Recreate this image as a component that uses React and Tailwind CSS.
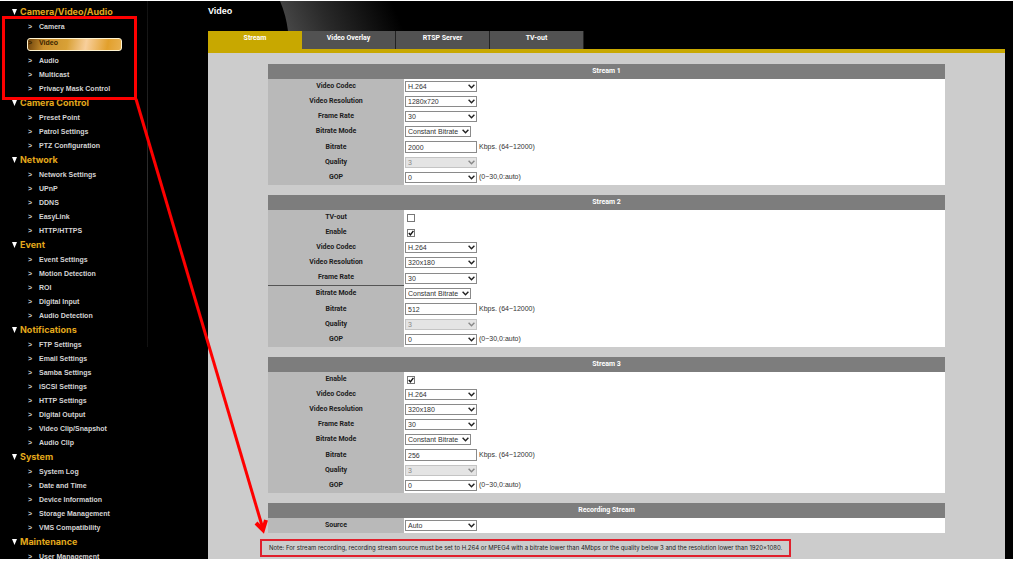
import React, { useId } from 'react';

const menu = [
    { title: 'Camera/Video/Audio', items: ['Camera', 'Video', 'Audio', 'Multicast', 'Privacy Mask Control'] },
    { title: 'Camera Control', items: ['Preset Point', 'Patrol Settings', 'PTZ Configuration'] },
    { title: 'Network', items: ['Network Settings', 'UPnP', 'DDNS', 'EasyLink', 'HTTP/HTTPS'] },
    { title: 'Event', items: ['Event Settings', 'Motion Detection', 'ROI', 'Digital Input', 'Audio Detection'] },
    {
        title: 'Notifications',
        items: [
            'FTP Settings',
            'Email Settings',
            'Samba Settings',
            'iSCSI Settings',
            'HTTP Settings',
            'Digital Output',
            'Video Clip/Snapshot',
            'Audio Clip',
        ],
    },
    { title: 'System', items: ['System Log', 'Date and Time', 'Device Information', 'Storage Management', 'VMS Compatibility'] },
    { title: 'Maintenance', items: ['User Management'] },
];

const tabs = ['Stream', 'Video Overlay', 'RTSP Server', 'TV-out'];

const streamRows = (resolution, bitrate, divider = false) => [
    { label: 'Video Codec', type: 'select', value: 'H.264' },
    { label: 'Video Resolution', type: 'select', value: resolution },
    { label: 'Frame Rate', type: 'select', value: '30', divider },
    { label: 'Bitrate Mode', type: 'select', value: 'Constant Bitrate', narrow: true },
    { label: 'Bitrate', type: 'text', value: bitrate, hint: 'Kbps. (64~12000)' },
    { label: 'Quality', type: 'select', value: '3', disabled: true },
    { label: 'GOP', type: 'select', value: '0', hint: '(0~30,0:auto)' },
];

const sections = [
    { title: 'Stream 1', rows: streamRows('1280x720', '2000') },
    {
        title: 'Stream 2',
        rows: [
            { label: 'TV-out', type: 'checkbox', checked: false },
            { label: 'Enable', type: 'checkbox', checked: true },
            ...streamRows('320x180', '512', true),
        ],
    },
    {
        title: 'Stream 3',
        rows: [{ label: 'Enable', type: 'checkbox', checked: true }, ...streamRows('320x180', '256')],
    },
    { title: 'Recording Stream', rows: [{ label: 'Source', type: 'select', value: 'Auto' }] },
];

function MenuItem({ label, active }) {
    if (active) {
        return (
            <li className="flex h-5 items-center pl-[27px]">
                <a
                    href="#video"
                    aria-current="page"
                    className="flex h-[13px] w-[95px] rounded-[3px] border border-[#fff3d0] bg-[linear-gradient(100deg,#6f430c_0%,#c98f2c_18%,#d9a136_42%,#f8cf9c_62%,#e2a02c_85%,#e8b050_100%)] text-[7px] leading-[7px] text-[#3a2400]"
                >
                    <span className="w-[11px]">&gt;</span>
                    {label}
                </a>
            </li>
        );
    }

    return (
        <li className="h-[14px] pl-7">
            <a href={`#${label}`} className="flex text-[7px] leading-[14px] text-[#d4d4d4]">
                <span className="w-[11px]">&gt;</span>
                {label}
            </a>
        </li>
    );
}

function Sidebar() {
    return (
        <nav className="relative w-[208px] shrink-0 overflow-hidden pt-[3px]">
            {menu.map((group) => (
                <section key={group.title}>
                    <h2 className="flex h-4 items-center gap-[3px] pl-3 font-[Inter,sans-serif] text-[9px] leading-4 text-[#e3a81c]">
                        <svg viewBox="0 0 6 6" className="h-[6px] w-[5px]" fill="white" preserveAspectRatio="none">
                            <path d="M0 0h6L3 6z" />
                        </svg>
                        {group.title}
                    </h2>
                    <ul className="-mb-px">
                        {group.items.map((item) => (
                            <MenuItem key={item} label={item} active={item === 'Video'} />
                        ))}
                    </ul>
                </section>
            ))}
            <div className="absolute left-[147px] top-0 h-[346px] w-px bg-linear-to-b from-[#111] via-[#2c2c2c] to-[#111]" />
        </nav>
    );
}

function Field({ id, row }) {
    if (row.type === 'checkbox') {
        return (
            <span className="relative ml-[2px] flex size-2">
                <input
                    id={id}
                    type="checkbox"
                    defaultChecked={row.checked}
                    className="peer size-2 appearance-none border border-[#777] bg-white"
                />
                <svg
                    viewBox="0 0 8 8"
                    className="pointer-events-none absolute inset-0 hidden size-2 peer-checked:block"
                    fill="none"
                    stroke="#111"
                    strokeWidth="1.4"
                >
                    <path d="M1.8 4l1.6 1.8L6.4 1.8" />
                </svg>
            </span>
        );
    }

    if (row.type === 'text') {
        return (
            <input
                id={id}
                type="text"
                defaultValue={row.value}
                className="h-3 w-[72px] border border-[#8a8a8a] bg-white px-[2px] font-['Liberation_Sans',Arial,sans-serif] text-[7px] leading-[9px] text-[#333]"
            />
        );
    }

    return (
        <span className={`relative flex ${row.narrow ? 'w-[66px]' : 'w-[72px]'}`}>
            <select
                id={id}
                disabled={row.disabled}
                className="h-[11px] w-full appearance-none border border-[#8a8a8a] bg-white px-[2px] font-['Liberation_Sans',Arial,sans-serif] text-[7px] leading-[9px] text-[#333] disabled:border-[#c4c4c4] disabled:bg-[#e4e4e4] disabled:text-[#888] disabled:opacity-100"
            >
                <option>{row.value}</option>
            </select>
            <svg
                viewBox="0 0 7 5"
                className="pointer-events-none absolute right-[2px] top-[3px] h-[5px] w-[7px]"
                fill="none"
                stroke={row.disabled ? '#888' : '#222'}
                strokeWidth="1.4"
            >
                <path d="M0.6 0.8L3.5 3.8L6.4 0.8" />
            </svg>
        </span>
    );
}

function SettingsTable({ title, rows }) {
    const prefix = useId();

    return (
        <table className="w-full table-fixed border-collapse text-[7px]">
            <colgroup>
                <col className="w-[136px]" />
                <col />
            </colgroup>
            <thead>
                <tr>
                    <th colSpan={2} className="h-[15px] bg-[#7d7d7d] p-0 text-center leading-[15px] text-white">
                        {title}
                    </th>
                </tr>
            </thead>
            <tbody>
                {rows.map((row) => {
                    const id = `${prefix}-${row.label}`;
                    return (
                        <tr key={row.label}>
                            <th scope="row" className="bg-[#b9b9b9] p-0 align-middle text-[#1c1c1c]">
                                <label
                                    htmlFor={id}
                                    className={`block text-center leading-[15px] ${row.divider ? 'border-b border-[#555]' : ''}`}
                                >
                                    {row.label}
                                </label>
                            </th>
                            <td className="bg-white p-0 align-middle">
                                <div className={`flex items-center gap-[2px] pl-px ${row.type === 'text' ? 'h-4' : 'h-[15px]'}`}>
                                    <Field id={id} row={row} />
                                    {row.hint && (
                                        <span className="font-['Liberation_Sans',Arial,sans-serif] text-[#333]">{row.hint}</span>
                                    )}
                                </div>
                            </td>
                        </tr>
                    );
                })}
            </tbody>
        </table>
    );
}

function Header() {
    return (
        <header className="relative">
            <svg
                className="absolute left-[72px] top-0 h-[30px] w-[140px]"
                viewBox="0 0 140 30"
                preserveAspectRatio="none"
            >
                <defs>
                    <linearGradient id="shine" gradientUnits="userSpaceOnUse" x1="0" y1="30" x2="105" y2="-15">
                        <stop offset="0" stopColor="#4c4c4c" />
                        <stop offset="0.4" stopColor="#2a2a2a" />
                        <stop offset="1" stopColor="#000" />
                    </linearGradient>
                </defs>
                <path d="M0 0H140V30H8Q6 14 0 0z" fill="url(#shine)" />
            </svg>
            <h1 className="relative h-[30px] text-[9px] leading-[21px] text-white">Video</h1>
            <div role="tablist" className="relative flex border-b-4 border-[#c8a800]">
                {tabs.map((tab, i) => (
                    <button
                        key={tab}
                        role="tab"
                        type="button"
                        aria-selected={i === 0}
                        className={`h-[18px] w-[94px] pb-1 font-[Roboto,sans-serif] text-[7px] font-bold leading-[14px] text-white ${
                            i === 0 ? 'bg-[#c8a800]' : 'border-r border-[#222] bg-[#525252]'
                        }`}
                    >
                        {tab}
                    </button>
                ))}
            </div>
        </header>
    );
}

// Red box and arrow pointing from the menu to the note
function Callout() {
    return (
        <svg className="pointer-events-none absolute left-0 top-0 h-[561px] w-[300px]" fill="none" stroke="#fe0000">
            <rect x="3.5" y="17.5" width="132" height="81" strokeWidth="3" />
            <path d="M136 99L263 529" strokeWidth="3" />
            <path d="M256 523L263 530L266 520" strokeWidth="4" />
        </svg>
    );
}

export default function App() {
    return (
        <div className="relative h-screen overflow-hidden bg-white pb-[2px] pt-px font-['Liberation_Sans',Arial,sans-serif]">
            <div className="flex h-full bg-black font-bold">
                <Sidebar />
                <main className="flex min-w-0 flex-1 flex-col pr-2">
                    <Header />
                    <form className="flex flex-1 flex-col bg-[#ccc] pt-[11px] font-[Roboto,sans-serif] font-normal">
                        <div className="mx-[60px] flex flex-col gap-[10px]">
                            {sections.map((section) => (
                                <SettingsTable key={section.title} title={section.title} rows={section.rows} />
                            ))}
                        </div>
                        <p className="ml-[52px] mt-[6px] self-start border-2 border-[#e0202c] px-[7px] font-[Inter,sans-serif] text-[6px] leading-[14px] text-[#222]">
                            Note: For stream recording, recording stream source must be set to H.264 or MPEG4 with a bitrate lower than
                            4Mbps or the quality below 3 and the resolution lower than 1920x1080.
                        </p>
                    </form>
                </main>
            </div>
            <Callout />
        </div>
    );
}
